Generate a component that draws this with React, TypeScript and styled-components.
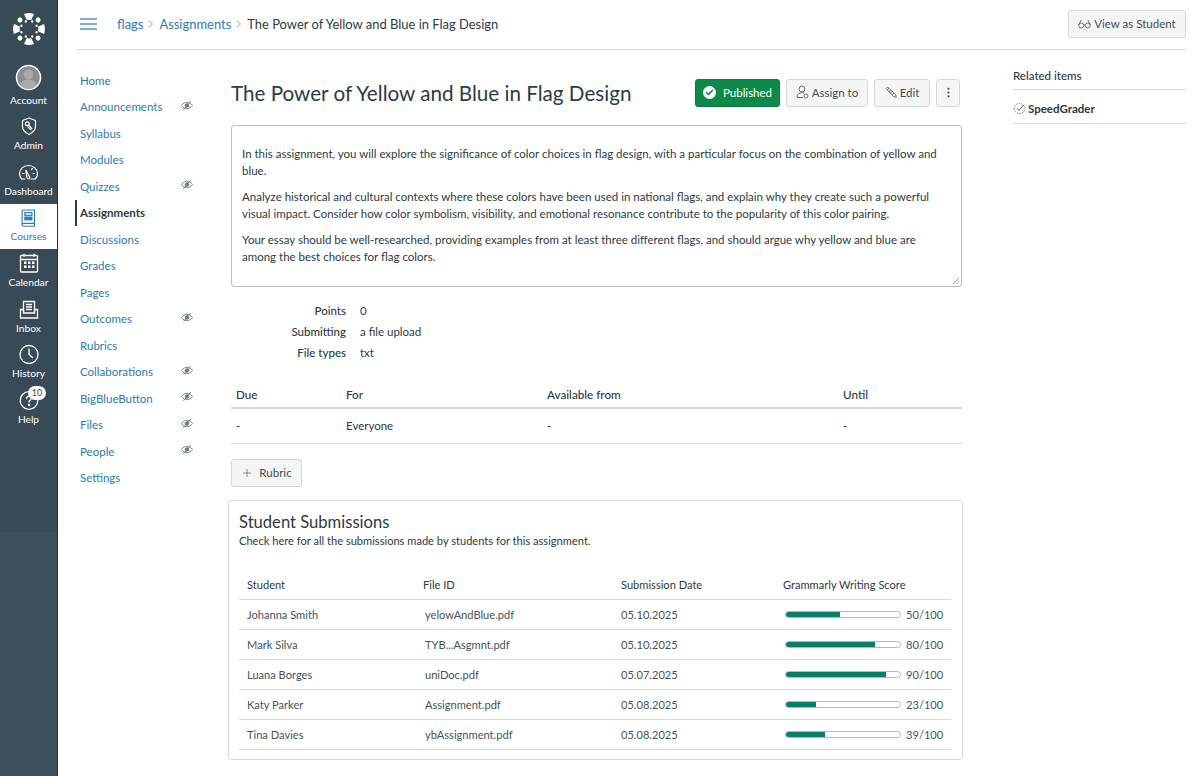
import { Fragment } from 'react';
import styled, { createGlobalStyle } from 'styled-components';
import { Check, Plus, EllipsisVertical } from 'lucide-react';

const GlobalStyle = createGlobalStyle`
  html, body {
    margin: 0;
    padding: 0;
    background: #fff;
    font-family: Lato, "Open Sans", sans-serif;
    color: #2d3b45;
  }
`;

const Page = styled.div`
  display: flex;
  width: 1200px;
  height: 776px;
  overflow: hidden;
`;

const Rail = styled.nav`
  width: 58px;
  flex: none;
  box-sizing: border-box;
  background: linear-gradient(#394a57 0, #394a57 532px, #3d4f5d 532px);
  border-right: 1px solid #22313d;
  display: flex;
  flex-direction: column;
  align-items: stretch;
`;

const LogoWrap = styled.div`
  height: 67px;
  box-sizing: border-box;
  padding-top: 13px;
  display: flex;
  justify-content: center;
  align-items: flex-start;
`;

const RailItem = styled.div<{ $active?: boolean }>`
  position: relative;
  height: 45.6px;
  display: flex;
  flex-direction: column;
  align-items: center;
  justify-content: flex-end;
  padding-bottom: 6px;
  box-sizing: border-box;
  gap: 3px;
  font-size: 10.2px;
  line-height: 13px;
  color: ${p => (p.$active ? '#2b7abc' : '#fff')};
  background: ${p => (p.$active ? '#fff' : 'transparent')};
  svg {
    flex: none;
  }
`;

const Badge = styled.span`
  position: absolute;
  top: 0;
  left: 28px;
  width: 18px;
  height: 14px;
  border-radius: 7px;
  background: #fff;
  color: #394b58;
  font-size: 9px;
  line-height: 14px;
  text-align: center;
`;

const Body = styled.div`
  flex: 1;
  display: flex;
  flex-direction: column;
  padding: 0 14px 0 18px;
  min-width: 0;
`;

const Header = styled.header`
  height: 50px;
  box-sizing: border-box;
  flex: none;
  display: flex;
  align-items: center;
  padding-bottom: 1px;
  border-bottom: 1px solid #d7dadd;
`;

const Burger = styled.div`
  width: 17px;
  margin: 0 20px 0 4px;
  display: flex;
  flex-direction: column;
  gap: 3px;
  span {
    display: block;
    height: 2px;
    background: #7eaed6;
  }
`;

const Crumbs = styled.div`
  flex: 1;
  display: flex;
  align-items: center;
  font-size: 12.95px;
  color: #2d3b45;
`;

const CrumbLink = styled.span`
  color: #2b7abc;
`;

const CrumbSep = styled.span`
  width: 16px;
  display: flex;
  justify-content: center;
`;

const Btn = styled.div<{ $width: number; $primary?: boolean; $gap?: number }>`
  width: ${p => p.$width}px;
  height: 28px;
  box-sizing: border-box;
  flex: none;
  display: flex;
  align-items: center;
  justify-content: center;
  gap: ${p => p.$gap ?? 3}px;
  padding-bottom: 1px;
  border-radius: 3px;
  font-size: 11.5px;
  border: 1px solid ${p => (p.$primary ? '#0b7a3e' : '#d4d8dc')};
  background: ${p => (p.$primary ? '#0e8a48' : '#f5f5f5')};
  color: ${p => (p.$primary ? '#fff' : '#3f4d58')};
`;

const Columns = styled.div`
  flex: 1;
  display: flex;
  min-height: 0;
`;

const CourseNav = styled.ul`
  list-style: none;
  margin: 0;
  padding: 17px 0 0;
  width: 155px;
  flex: none;
`;

const CourseNavItem = styled.li<{ $active?: boolean }>`
  height: 26.5px;
  display: flex;
  align-items: center;
  justify-content: space-between;
  box-sizing: border-box;
  margin-left: -1px;
  padding-left: 3px;
  padding-right: 38px;
  font-size: 11.5px;
  color: ${p => (p.$active ? '#2d3b45' : '#2b7abc')};
  font-weight: ${p => (p.$active ? 700 : 400)};
  border-left: 2px solid ${p => (p.$active ? '#2d3b45' : 'transparent')};
  svg {
    margin-bottom: 3px;
  }
`;

const Main = styled.main`
  width: 731px;
  flex: none;
  padding-top: 28px;
`;

const TitleRow = styled.div`
  height: 29px;
  display: flex;
  align-items: center;
  gap: 6px;
  padding-right: 2px;
`;

const Title = styled.h1`
  flex: 1;
  margin: 0;
  font-size: 20.65px;
  font-weight: 400;
  color: #2d3b45;
  white-space: nowrap;
`;

const Description = styled.div`
  margin-top: 18px;
  height: 162px;
  box-sizing: border-box;
  border: 1px solid #b9bfc4;
  border-radius: 3px;
  padding: 19px 10px 0;
  font-size: 11.5px;
  line-height: 17px;
  position: relative;
  p {
    margin: 0 0 9px;
  }
`;

const ResizeGrip = styled.svg`
  position: absolute;
  right: 1px;
  bottom: 1px;
`;

const Details = styled.dl`
  margin: 13px 0 0;
  display: grid;
  grid-template-columns: 115px 1fr;
  column-gap: 14px;
  font-size: 11.5px;
  line-height: 21px;
  dt {
    font-weight: 500;
    text-align: right;
  }
  dd {
    margin: 0;
  }
`;

const DateGrid = styled.div`
  margin-top: 21px;
  display: grid;
  grid-template-columns: 110px 201px 296px 1fr;
  font-size: 11.5px;
`;

const DateHead = styled.div`
  height: 23px;
  padding-left: 5px;
  border-bottom: 2px solid #d7dadd;
  font-size: 11.7px;
  font-weight: 500;
  line-height: 20px;
`;

const DateCell = styled.div`
  height: 35px;
  box-sizing: border-box;
  padding-left: 5px;
  border-bottom: 1px solid #d7dadd;
  line-height: 34px;
`;

const RubricRow = styled.div`
  margin-top: 15px;
`;

const Card = styled.section`
  margin: 13px 0 0 -3px;
  width: 735px;
  height: 260px;
  box-sizing: border-box;
  border: 1px solid #d7dadd;
  border-radius: 3px;
  padding: 11px 11px 0 10px;
`;

const CardTitle = styled.h2`
  margin: 0;
  font-size: 16.6px;
  font-weight: 400;
  line-height: 21px;
  color: #2d3b45;
`;

const CardSub = styled.div`
  font-size: 11.1px;
  line-height: 16px;
`;

const SubTable = styled.div`
  margin-top: 21px;
  display: grid;
  grid-template-columns: 176px 198px 162px 1fr;
  font-size: 11.1px;
`;

const SubHead = styled.div`
  height: 30px;
  box-sizing: border-box;
  padding-left: 8px;
  border-bottom: 1px solid #d7dadd;
  line-height: 29px;
`;

const SubCell = styled.div<{ $nudge?: number }>`
  height: 30px;
  box-sizing: border-box;
  padding-left: ${p => 8 + (p.$nudge ?? 0)}px;
  border-bottom: 1px solid #d7dadd;
  line-height: 30px;
  color: #46535d;
  display: flex;
  align-items: center;
`;

const Track = styled.div`
  width: 116px;
  height: 7px;
  box-sizing: border-box;
  border: 1px solid #9cc4ba;
  border-radius: 4px;
  overflow: hidden;
  margin-left: 2px;
  margin-right: 5px;
  flex: none;
`;

const Fill = styled.div`
  height: 100%;
  background: #087e6a;
  margin: -1px;
  box-sizing: content-box;
  padding-bottom: 2px;
`;

const Side = styled.aside`
  margin-left: 51px;
  width: 173px;
  flex: none;
  padding-top: 15px;
  font-size: 11.5px;
  font-weight: 500;
`;

const SideHead = styled.div`
  height: 24px;
  line-height: 21px;
  border-bottom: 1px solid #d7dadd;
`;

const SideRow = styled.div`
  height: 30px;
  padding-top: 3px;
  display: flex;
  align-items: center;
  gap: 2px;
  border-bottom: 1px solid #d7dadd;
  font-weight: 700;
`;

const Published = styled.span`
  width: 13px;
  height: 13px;
  border-radius: 50%;
  background: #fff;
  color: #0e8a48;
  display: flex;
  align-items: center;
  justify-content: center;
  margin-right: 4px;
`;

const Logo = () => (
  <svg width="32" height="32" viewBox="-16 -16 32 32" fill="#fff">
    {[0, 90, 180, 270].map(deg => (
      <path key={deg} transform={`rotate(${deg})`} d="M-5-15Q0-16.800 5-15L2.200-9Q0-9.600-2.200-9Z" />
    ))}
    {[45, 135, 225, 315].map(deg => (
      <circle key={deg} transform={`rotate(${deg})`} cx="0" cy="-12.800" r="2.500" />
    ))}
    {[22.5, 67.5, 112.5, 157.5, 202.5, 247.5, 292.5, 337.5].map(deg => (
      <circle key={deg} transform={`rotate(${deg})`} cx="0" cy="-8.200" r="1.200" />
    ))}
  </svg>
);

const AccountIcon = () => (
  <svg width="27" height="27" viewBox="0 0 28 28">
    <circle cx="14" cy="14" r="12.500" fill="#8b8f92" stroke="#fff" strokeWidth="1.500" />
    <circle cx="14" cy="11" r="5" fill="#a9acae" />
    <path d="M5.500 22c1-4.500 4.500-6 8.500-6s7.500 1.500 8.500 6c-2 2.500-5 3.800-8.500 3.800S7.500 24.500 5.500 22z" fill="#a9acae" />
  </svg>
);

const AdminIcon = () => (
  <svg width="20" height="20" viewBox="0 0 20 20" fill="none" stroke="#fff" strokeWidth="1.200" strokeLinejoin="round">
    <path d="M10 2l6.500 2.500v6c0 3.500-2.800 6.200-6.500 8-3.700-1.800-6.500-4.500-6.500-8v-6L10 2z" />
    <circle cx="8.300" cy="7.800" r="1.900" />
    <path d="M9.700 9.200l3 3.300-1.100 1.100-3-3.300" />
  </svg>
);

const DashboardIcon = () => (
  <svg width="21" height="20" viewBox="0 0 21 20" fill="none" stroke="#fff" strokeWidth="1.200" strokeLinecap="round">
    <path d="M3.800 17C2.300 15.600 1.500 13.800 1.500 11.800 1.500 7 5.500 3.500 10.500 3.500s9 3.500 9 8.300c0 2-.8 3.800-2.300 5.200" />
    <path d="M13 17h4.200M3.800 17h3" />
    <path d="M7.800 8l3.500 6.500a1.400 1.400 0 1 1-2.400 1.200L7.800 8z" />
    <path d="M4.500 11.500H6M15 11.500h1.500M13.500 7.500l1-1" />
  </svg>
);

const CoursesIcon = () => (
  <svg width="16" height="18" viewBox="0 0 18 20" fill="none" stroke="#2b7abc" strokeWidth="1.300">
    <path d="M3 1h12.200v15H3.500C2.100 16 1.200 17 1.200 18V3c0-1.100.8-2 1.800-2z" />
    <path d="M1.400 18c0 .8.800 1.300 2 1.300h11.800V16" />
    <rect x="4.300" y="4" width="8" height="3" />
    <rect x="4.300" y="9" width="8" height="3" fill="#2b7abc" />
  </svg>
);

const CalendarIcon = () => (
  <svg width="20" height="20" viewBox="0 0 20 20" fill="none" stroke="#fff" strokeWidth="1.300">
    <rect x="1.500" y="2.500" width="17" height="16.500" rx="1" />
    <path d="M1.500 6.500h17M5 .8v3M15 .8v3" />
    {[8.5, 12.5].map(y => [5, 9, 13].map(x => <rect key={`${x}-${y}`} x={x} y={y} width="2.500" height="2.500" fill="#fff" stroke="none" />))}
  </svg>
);

const InboxIcon = () => (
  <svg width="20" height="20" viewBox="0 -1 20 20" fill="none" stroke="#fff" strokeWidth="1.300">
    <path d="M4.500 12V1.500h11V12" />
    <path d="M7 4.500h6M7 7h6M7 9.500h6" />
    <path d="M1.500 9.500h3v3.500h11V9.500h3V18h-17V9.500z" />
  </svg>
);

const HistoryIcon = () => (
  <svg width="20" height="20" viewBox="0 0 20 20" fill="none" stroke="#fff" strokeWidth="1.300" strokeLinecap="round">
    <circle cx="10" cy="10.500" r="9" />
    <path d="M10 5v5.500l3.500 3" />
  </svg>
);

const HelpIcon = () => (
  <svg width="20" height="20" viewBox="0 0 20 20" fill="none" stroke="#fff" strokeWidth="1.300" strokeLinecap="round">
    <circle cx="10" cy="10.500" r="8.800" />
    <path d="M7.700 8.500c0-1.400.9-2.300 2.300-2.300s2.300.9 2.300 2.100c0 1.900-2.300 1.900-2.300 3.700" />
    <circle cx="10" cy="15" r=".6" fill="#fff" />
  </svg>
);

const Chevron = () => (
  <svg width="6" height="8" viewBox="0 0 6 8" fill="none" stroke="#9aa3aa" strokeWidth="1">
    <path d="M1 .8L4.500 4 1 7.200" />
  </svg>
);

const HiddenEye = () => (
  <svg width="12" height="11" viewBox="0 0 12 11" fill="none" stroke="#6e7a83" strokeWidth=".9">
    <path d="M.5 5.500C2 3.300 4 2.300 6 2.300s4 1 5.500 3.200C10 7.700 8 8.700 6 8.700S2 7.700.5 5.500z" />
    <circle cx="6" cy="5.500" r="1.800" fill="#6e7a83" />
    <path d="M2.500 9.800L9.800 1" />
  </svg>
);

const GlassesIcon = () => (
  <svg width="13" height="10" viewBox="0 0 13 10" fill="none" stroke="#59666f" strokeWidth=".9">
    <circle cx="3.200" cy="6.500" r="2.500" />
    <circle cx="9.800" cy="6.500" r="2.500" />
    <path d="M5.700 6c.5-.4 1.100-.4 1.600 0M.8 6L3 1M12.200 6L10 1" />
  </svg>
);

const UserIcon = () => (
  <svg width="13" height="14" viewBox="0 0 13 14" fill="none" stroke="#59666f" strokeWidth=".9">
    <circle cx="6" cy="4" r="3" />
    <path d="M1 12.500c0-3 2-4.800 5-4.800 1 0 1.800.2 2.500.5M1 12.500h6" />
    <circle cx="10" cy="11" r="2" />
  </svg>
);

const PencilIcon = () => (
  <svg width="12" height="12" viewBox="0 0 12 12" fill="none" stroke="#59666f" strokeWidth=".9" strokeLinejoin="round">
    <path d="M1 2.500L2.500 1l8 7.500.8 2.800-2.900-.8L1 2.500z" />
    <path d="M2.300 3.800l1.500-1.500M4 5.400l1.500-1.500M5.700 7l1.500-1.500M7.400 8.600l1.500-1.500" />
  </svg>
);

const SpeedIcon = () => (
  <svg width="13" height="11" viewBox="0 0 13 11" fill="none" stroke="#5a6770" strokeWidth=".8">
    <path d="M1 6a5.500 5.500 0 0 1 11 0M1 6c.5 2.500 2.800 4.500 5.500 4.500S11.500 8.500 12 6" strokeDasharray="1.500 1" />
    <path d="M3.800 5l2.300 2.500L10.500 2" strokeWidth="1" />
  </svg>
);

const railItems = [
  { label: 'Account', icon: <AccountIcon /> },
  { label: 'Admin', icon: <AdminIcon /> },
  { label: 'Dashboard', icon: <DashboardIcon /> },
  { label: 'Courses', icon: <CoursesIcon />, active: true },
  { label: 'Calendar', icon: <CalendarIcon /> },
  { label: 'Inbox', icon: <InboxIcon /> },
  { label: 'History', icon: <HistoryIcon /> },
  { label: 'Help', icon: <HelpIcon />, badge: '10' },
];

const navItems = [
  { label: 'Home' },
  { label: 'Announcements', hidden: true },
  { label: 'Syllabus' },
  { label: 'Modules' },
  { label: 'Quizzes', hidden: true },
  { label: 'Assignments', active: true },
  { label: 'Discussions' },
  { label: 'Grades' },
  { label: 'Pages' },
  { label: 'Outcomes', hidden: true },
  { label: 'Rubrics' },
  { label: 'Collaborations', hidden: true },
  { label: 'BigBlueButton', hidden: true },
  { label: 'Files', hidden: true },
  { label: 'People', hidden: true },
  { label: 'Settings' },
];

const submissions = [
  { name: 'Johanna Smith', file: 'yelowAndBlue.pdf', date: '05.10.2025', score: 50, bar: 55 },
  { name: 'Mark Silva', file: 'TYB...Asgmnt.pdf', date: '05.10.2025', score: 80, bar: 90 },
  { name: 'Luana Borges', file: 'uniDoc.pdf', date: '05.07.2025', score: 90, bar: 101 },
  { name: 'Katy Parker', file: 'Assignment.pdf', date: '05.08.2025', score: 23, bar: 31 },
  { name: 'Tina Davies', file: 'ybAssignment.pdf', date: '05.08.2025', score: 39, bar: 40 },
];

export default function App() {
  return (
    <>
      <GlobalStyle />
      <Page>
        <Rail>
          <LogoWrap>
            <Logo />
          </LogoWrap>
          {railItems.map(item => (
            <RailItem key={item.label} $active={item.active}>
              {item.icon}
              {item.label}
              {item.badge && <Badge>{item.badge}</Badge>}
            </RailItem>
          ))}
        </Rail>
        <Body>
          <Header>
            <Burger>
              <span />
              <span />
              <span />
            </Burger>
            <Crumbs>
              <CrumbLink>flags</CrumbLink>
              <CrumbSep>
                <Chevron />
              </CrumbSep>
              <CrumbLink>Assignments</CrumbLink>
              <CrumbSep>
                <Chevron />
              </CrumbSep>
              The Power of Yellow and Blue in Flag Design
            </Crumbs>
            <Btn $width={118}>
              <GlassesIcon /> View as Student
            </Btn>
          </Header>
          <Columns>
            <CourseNav>
              {navItems.map(item => (
                <CourseNavItem key={item.label} $active={item.active}>
                  {item.label}
                  {item.hidden && <HiddenEye />}
                </CourseNavItem>
              ))}
            </CourseNav>
            <Main>
              <TitleRow>
                <Title>The Power of Yellow and Blue in Flag Design</Title>
                <Btn $width={85} $primary>
                  <Published>
                    <Check size={9} strokeWidth={4} />
                  </Published>
                  Published
                </Btn>
                <Btn $width={82}>
                  <UserIcon /> Assign to
                </Btn>
                <Btn $width={56}>
                  <PencilIcon /> Edit
                </Btn>
                <Btn $width={24}>
                  <EllipsisVertical size={13} />
                </Btn>
              </TitleRow>
              <Description>
                <p>
                  In this assignment, you will explore the significance of color choices in flag design, with a particular focus on the combination of yellow and blue.
                </p>
                <p>
                  Analyze historical and cultural contexts where these colors have been used in national flags, and explain why they create such a powerful visual impact. Consider how color symbolism, visibility, and emotional resonance contribute to the popularity of this color pairing.
                </p>
                <p>
                  Your essay should be well-researched, providing examples from at least three different flags, and should argue why yellow and blue are among the best choices for flag colors.
                </p>
                <ResizeGrip width="8" height="8" viewBox="0 0 8 8" stroke="#7a858d" strokeWidth=".8">
                  <path d="M1 7L7 1M4.500 7L7 4.500" />
                </ResizeGrip>
              </Description>
              <Details>
                <dt>Points</dt>
                <dd>0</dd>
                <dt>Submitting</dt>
                <dd>a file upload</dd>
                <dt>File types</dt>
                <dd>txt</dd>
              </Details>
              <DateGrid>
                <DateHead>Due</DateHead>
                <DateHead>For</DateHead>
                <DateHead>Available from</DateHead>
                <DateHead>Until</DateHead>
                <DateCell>-</DateCell>
                <DateCell>Everyone</DateCell>
                <DateCell>-</DateCell>
                <DateCell>-</DateCell>
              </DateGrid>
              <RubricRow>
                <Btn $width={71} $gap={6}>
                  <Plus size={12} strokeWidth={1.2} /> Rubric
                </Btn>
              </RubricRow>
              <Card>
                <CardTitle>Student Submissions</CardTitle>
                <CardSub>Check here for all the submissions made by students for this assignment.</CardSub>
                <SubTable>
                  <SubHead>Student</SubHead>
                  <SubHead>File ID</SubHead>
                  <SubHead>Submission Date</SubHead>
                  <SubHead>Grammarly Writing Score</SubHead>
                  {submissions.map(row => (
                    <Fragment key={row.name}>
                      <SubCell>{row.name}</SubCell>
                      <SubCell $nudge={2}>{row.file}</SubCell>
                      <SubCell>{row.date}</SubCell>
                      <SubCell>
                        <Track>
                          <Fill style={{ width: `${row.bar}px` }} />
                        </Track>
                        {row.score}/100
                      </SubCell>
                    </Fragment>
                  ))}
                </SubTable>
              </Card>
            </Main>
            <Side>
              <SideHead>Related items</SideHead>
              <SideRow>
                <SpeedIcon /> SpeedGrader
              </SideRow>
            </Side>
          </Columns>
        </Body>
      </Page>
    </>
  );
}
